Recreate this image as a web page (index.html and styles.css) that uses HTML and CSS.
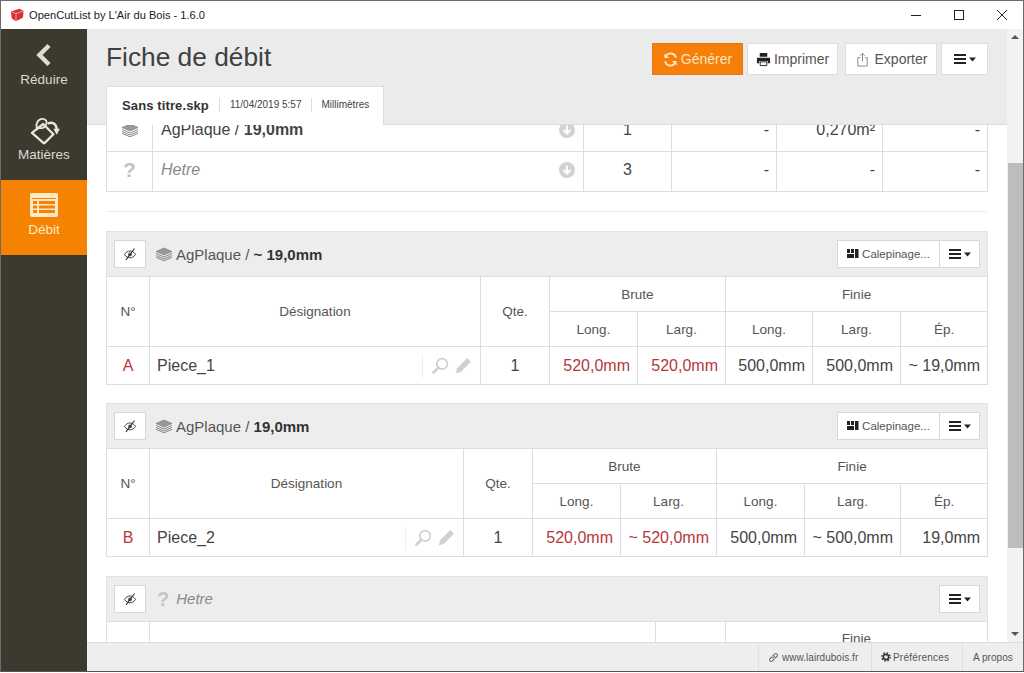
FILE: index.html
```html
<!DOCTYPE html>
<html lang="fr">
<head>
<meta charset="utf-8">
<title>OpenCutList by L'Air du Bois - 1.6.0</title>
<link rel="stylesheet" href="styles.css">
</head>
<body>
<svg class="defs" aria-hidden="true">
  <symbol id="i-eye" viewBox="0 0 14 14"><path d="M1.500 7.400C3 5 5 4 7 4s4 1 5.500 3.400C11 9.800 9 10.800 7 10.800S3 9.800 1.500 7.400Z" fill="none" stroke="#444" stroke-width="1"/><circle cx="7" cy="7.400" r="1.900" fill="#555"/><path d="M3 12.800 11.500 1.500" stroke="#333" stroke-width="1.100"/></symbol>
  <symbol id="i-layers" viewBox="0 0 18 14"><path d="M9 1 17 4.500 9 8 1 4.500Z" fill="#999" stroke="#777" stroke-width=".6"/><path d="M1 6.500 9 10 17 6.500M1 8.500 9 12 17 8.500M1 10.300 9 13.800 17 10.300" fill="none" stroke="#888" stroke-width="1"/></symbol>
  <symbol id="i-bars" viewBox="0 0 22 12"><path d="M0 1h12v2H0zM0 5h12v2H0zM0 9h12v2H0z" fill="#222"/><path d="M15 4.500h7L18.500 8.500Z" fill="#222"/></symbol>
  <symbol id="i-cal" viewBox="0 0 12 10"><path d="M0 0h3v4H0zM4 0h3v4H4zM0 5h7v4H0zM8 0h3.500v9H8z" fill="#222"/></symbol>
  <symbol id="i-search" viewBox="0 0 16 16"><circle cx="9.500" cy="6.500" r="5" fill="none" stroke="#d0d0d0" stroke-width="1.600"/><path d="M6 10 1.500 14.500" stroke="#d0d0d0" stroke-width="2.600" stroke-linecap="round"/></symbol>
  <symbol id="i-pencil" viewBox="0 0 16 16"><path d="M11.500 1 15 4.500 5.500 14 .8 15.200 2 10.500Z" fill="#d0d0d0"/></symbol>
  <symbol id="i-down" viewBox="0 0 16 16"><circle cx="8" cy="8" r="8" fill="#d2d2d2"/><path d="M8 3.500v8M4.500 8 8 11.500 11.500 8" fill="none" stroke="#fff" stroke-width="2"/></symbol>
</svg>

<div class="window">
  <header class="titlebar">
    <svg class="app-logo" viewBox="0 0 14 14"><path d="M.8 3.500 9.500.8 13.500 3 13 9.500 6 13.200 1.800 10.500Z" fill="#d6332f"/><path d="M1 3.500 6 5.500 13.500 3M6 5.500 6 13" fill="none" stroke="#f6b8b0" stroke-width=".8"/></svg>
    <span class="app-title">OpenCutList by L'Air du Bois - 1.6.0</span>
    <div class="win-controls">
      <svg class="win-btn" viewBox="0 0 12 12"><path d="M1 6.500h10" stroke="#222" stroke-width="1"/></svg>
      <svg class="win-btn" viewBox="0 0 12 12"><rect x="1.500" y="1.500" width="9" height="9" fill="none" stroke="#222" stroke-width="1"/></svg>
      <svg class="win-btn" viewBox="0 0 12 12"><path d="M1 1 11 11M11 1 1 11" stroke="#222" stroke-width="1"/></svg>
    </div>
  </header>

  <div class="app">
    <nav class="sidebar">
      <a class="nav-item">
        <svg class="nav-icon nav-chevron" viewBox="0 0 16 24"><path d="M13 2.500 3.500 12 13 21.500" fill="none" stroke="#dedbd2" stroke-width="4.500"/></svg>
        <span>Réduire</span>
      </a>
      <a class="nav-item">
        <svg class="nav-icon nav-bucket" viewBox="0 0 32 30"><path d="M2 17 14 7.500 25 18.500 16 27.500Q15 28.500 14 27.500Z" fill="none" stroke="#e8e6df" stroke-width="2.400" stroke-linejoin="round"/><path d="M8 14C5 7 9 2 13 2s6 3 4 6.500c-1.500 2.500-4.500 4-8 3" fill="none" stroke="#e8e6df" stroke-width="2"/><path d="M19 7c5-2 9 0 9.500 6" fill="none" stroke="#e8e6df" stroke-width="2.600"/><path d="M25 12.500 28.500 19 32 12.500Z" fill="#e8e6df"/></svg>
        <span>Matières</span>
      </a>
      <a class="nav-item nav-active">
        <svg class="nav-icon nav-list" viewBox="0 0 28 24"><rect width="28" height="24" rx="2" fill="#ffe8c4"/><path d="M2 5h24v1H2z" fill="#f58200"/><path d="M3 8h4v3H3zM9 8h16v3H9zM3 12.500h4v3H3zM9 12.500h16v3H9zM3 17h4v3H3zM9 17h16v3H9z" fill="#f58200"/></svg>
        <span>Débit</span>
      </a>
    </nav>

    <div class="main">
      <div class="workspace">
        <div class="content">
          <div class="head">
            <div class="head-top">
              <h1 class="page-title">Fiche de débit</h1>
              <div class="actions">
                <button class="btn btn-primary">
                  <svg class="btn-ic" viewBox="0 0 16 16"><path d="M13.800 6A6 6 0 0 0 3 4.200M2.200 10A6 6 0 0 0 13 11.800" fill="none" stroke="#ffe8c4" stroke-width="2"/><path d="M1.500 1.500v5h5ZM14.500 14.500v-5h-5Z" fill="#ffe8c4"/></svg>Générer
                </button>
                <button class="btn btn-print">
                  <svg class="btn-ic" viewBox="0 0 16 16"><path d="M4 1h8v4H4zM1 6h14v6h-2.500V9.500h-9V12H1z" fill="#222"/><path d="M4.500 10.500h7v4h-7z" fill="#fff" stroke="#222"/></svg>Imprimer
                </button>
                <button class="btn btn-export">
                  <svg class="btn-ic" viewBox="0 0 16 16"><path d="M5.500 6H3v9h10V6h-2.500" fill="none" stroke="#888"/><path d="M8 10V1.500M5.500 4 8 1.500 10.500 4" fill="none" stroke="#888"/></svg>Exporter
                </button>
                <button class="btn btn-menu"><svg class="bars"><use href="#i-bars"/></svg></button>
              </div>
            </div>
            <div class="tab">
              <strong class="tab-file">Sans titre.skp</strong>
              <span class="tab-meta">11/04/2019 5:57</span>
              <span class="tab-meta">Millimètres</span>
            </div>
          </div>

          <div class="scroll">
            <table class="grid summary">
              <colgroup><col class="s1"><col class="s2"><col class="s3"><col class="s4"><col class="s4b"><col class="s4c"></colgroup>
              <tr>
                <td class="ctr"><svg class="sum-layers"><use href="#i-layers"/></svg></td>
                <td><div class="sum-name"><span>AgPlaque / <b>19,0mm</b></span><svg class="sum-down"><use href="#i-down"/></svg></div></td>
                <td class="ctr">1</td><td class="num">-</td><td class="num">0,270m²</td><td class="num">-</td>
              </tr>
              <tr>
                <td class="ctr"><span class="unknown">?</span></td>
                <td><div class="sum-name"><em class="muted">Hetre</em><svg class="sum-down"><use href="#i-down"/></svg></div></td>
                <td class="ctr">3</td><td class="num">-</td><td class="num">-</td><td class="num">-</td>
              </tr>
            </table>

            <hr class="sep">

            <section class="group">
              <div class="group-head">
                <button class="mini eye"><svg class="eye-ic"><use href="#i-eye"/></svg></button>
                <svg class="layers"><use href="#i-layers"/></svg>
                <span class="group-title">AgPlaque / <b>~ 19,0mm</b></span>
                <div class="group-actions">
                  <button class="mini cal"><svg class="cal-ic"><use href="#i-cal"/></svg>Calepinage...</button>
                  <button class="mini more"><svg class="bars"><use href="#i-bars"/></svg></button>
                </div>
              </div>
              <table class="grid parts">
                <colgroup><col class="c-n"><col class="c-des1"><col class="c-q"><col class="c-88"><col class="c-88"><col class="c-87"><col class="c-88"><col class="c-87"></colgroup>
                <tr class="r-head"><th rowspan="2">N°</th><th rowspan="2">Désignation</th><th rowspan="2">Qte.</th><th colspan="2">Brute</th><th colspan="3">Finie</th></tr>
                <tr class="r-head"><th>Long.</th><th>Larg.</th><th>Long.</th><th>Larg.</th><th>Ép.</th></tr>
                <tr class="r-body">
                  <td class="ctr red">A</td>
                  <td><div class="part-name"><span class="part-text">Piece_1</span><span class="part-tools"><svg class="tool"><use href="#i-search"/></svg><svg class="tool"><use href="#i-pencil"/></svg></span></div></td>
                  <td class="ctr">1</td><td class="num red">520,0mm</td><td class="num red">520,0mm</td><td class="num">500,0mm</td><td class="num">500,0mm</td><td class="num">~ 19,0mm</td>
                </tr>
              </table>
            </section>

            <section class="group">
              <div class="group-head">
                <button class="mini eye"><svg class="eye-ic"><use href="#i-eye"/></svg></button>
                <svg class="layers"><use href="#i-layers"/></svg>
                <span class="group-title">AgPlaque / <b>19,0mm</b></span>
                <div class="group-actions">
                  <button class="mini cal"><svg class="cal-ic"><use href="#i-cal"/></svg>Calepinage...</button>
                  <button class="mini more"><svg class="bars"><use href="#i-bars"/></svg></button>
                </div>
              </div>
              <table class="grid parts">
                <colgroup><col class="c-n"><col class="c-des2"><col class="c-q"><col class="c-88"><col class="c-96"><col class="c-88"><col class="c-96"><col class="c-87"></colgroup>
                <tr class="r-head"><th rowspan="2">N°</th><th rowspan="2">Désignation</th><th rowspan="2">Qte.</th><th colspan="2">Brute</th><th colspan="3">Finie</th></tr>
                <tr class="r-head"><th>Long.</th><th>Larg.</th><th>Long.</th><th>Larg.</th><th>Ép.</th></tr>
                <tr class="r-body">
                  <td class="ctr red">B</td>
                  <td><div class="part-name"><span class="part-text">Piece_2</span><span class="part-tools"><svg class="tool"><use href="#i-search"/></svg><svg class="tool"><use href="#i-pencil"/></svg></span></div></td>
                  <td class="ctr">1</td><td class="num red">520,0mm</td><td class="num red">~ 520,0mm</td><td class="num">500,0mm</td><td class="num">~ 500,0mm</td><td class="num">19,0mm</td>
                </tr>
              </table>
            </section>

            <section class="group">
              <div class="group-head">
                <button class="mini eye"><svg class="eye-ic"><use href="#i-eye"/></svg></button>
                <span class="unknown unknown-head">?</span>
                <em class="group-title muted-dark">Hetre</em>
                <div class="group-actions">
                  <button class="mini more"><svg class="bars"><use href="#i-bars"/></svg></button>
                </div>
              </div>
              <table class="grid parts">
                <colgroup><col class="c-n"><col class="c-des3"><col class="c-q3"><col class="c-rest"></colgroup>
                <tr class="r-head"><th></th><th></th><th></th><th>Finie</th></tr>
              </table>
            </section>
          </div>
        </div>

        <aside class="scrollbar">
          <span class="arrow-up"></span>
          <div class="track"><div class="thumb"></div></div>
          <span class="arrow-down"></span>
        </aside>
      </div>

      <footer class="footer">
        <a class="foot-item foot-web">
          <svg class="foot-ic" viewBox="0 0 12 12"><path d="M5 7 7.500 4.500M4.500 5 2 7.500a1.800 1.800 0 0 0 2.500 2.500L7 7.500M5 4.500 7.500 2A1.800 1.800 0 0 1 10 4.500L7.500 7" fill="none" stroke="#666" stroke-width="1.100"/></svg>www.lairdubois.fr
        </a>
        <a class="foot-item foot-pref">
          <svg class="foot-ic" viewBox="0 0 12 12"><circle cx="6" cy="6" r="3.200" fill="none" stroke="#333" stroke-width="2"/><circle cx="6" cy="6" r="5" fill="none" stroke="#333" stroke-width="1.500" stroke-dasharray="2 1.930"/></svg>Préférences
        </a>
        <a class="foot-item foot-about">A propos</a>
      </footer>
    </div>
  </div>
</div>
</body>
</html>
```
FILE: styles.css
```css
* { box-sizing: border-box; }
html, body { margin: 0; padding: 0; height: 100%; overflow: hidden; background: #fff; }
body { font-family: "Liberation Sans", Arial, sans-serif; color: #444; }
.defs { position: absolute; width: 0; height: 0; }

.window { width: 1024px; height: 672px; display: flex; flex-direction: column; border: 1px solid #6b6b6b; border-bottom-color: #555; }

.titlebar { height: 28px; flex: none; display: flex; align-items: center; background: #fff; padding-left: 9px; }
.app-logo { width: 14px; height: 14px; margin-right: 5px; }
.app-title { font-size: 11.100px; color: #222; }
.win-controls { margin-left: auto; display: flex; align-items: center; gap: 31px; padding-right: 15px; }
.win-btn { width: 12px; height: 12px; }

.app { flex: 1; min-height: 0; display: flex; }

.sidebar { width: 86px; flex: none; background: #3c392e; }
.nav-item { height: 75.400px; display: flex; flex-direction: column; align-items: center; color: #dcdad3; font-size: 13.500px; line-height: 16px; }
.nav-icon { display: block; flex: none; }
.nav-chevron { width: 16px; height: 24px; margin-top: 14px; margin-bottom: 5px; }
.nav-bucket { width: 30px; height: 28px; margin-top: 13px; margin-bottom: 2px; margin-left: 1px; }
.nav-list { width: 28px; height: 24px; margin-top: 13px; margin-bottom: 5px; }
.nav-active { background: #f58200; color: #ffe8c4; }

.main { flex: 1; min-width: 0; display: flex; flex-direction: column; }
.workspace { flex: 1; min-height: 0; display: flex; }
.content { flex: 1; min-width: 0; display: flex; flex-direction: column; background: #fff; }

.head { height: 96px; flex: none; background: #ebebeb; border-bottom: 1px solid #ddd; padding: 0 19px; display: flex; flex-direction: column; justify-content: space-between; }
.head-top { display: flex; align-items: flex-start; justify-content: space-between; }
.page-title { margin: 12px 0 0; font-size: 26.300px; line-height: 32px; font-weight: 400; color: #404040; }
.actions { display: flex; margin-top: 14px; }
.btn { height: 32px; display: flex; align-items: center; justify-content: center; border: 1px solid #ddd; background: #fff; font: 14px "Liberation Sans", Arial, sans-serif; color: #555; padding: 0; }
.btn-ic { width: 15px; height: 15px; margin-right: 3px; flex: none; }
.btn-primary { width: 91px; background: #f57f0a; border-color: #e67a10; color: #ffe4bd; }
.btn-print { width: 91px; margin-left: 4px; }
.btn-export { width: 92px; margin-left: 7px; }
.btn-export .btn-ic { margin-right: 5px; }
.btn-menu { width: 47px; margin-left: 4px; }
.bars { width: 22px; height: 12px; display: block; }

.tab { width: 278px; height: 39px; margin-bottom: -1px; background: #fff; border: 1px solid #ddd; border-bottom: 0; display: flex; align-items: center; padding: 0 0 2px 15px; }
.tab-file { font-size: 13px; letter-spacing: .12px; color: #333; padding-right: 10px; }
.tab-meta { font-size: 10px; color: #444; border-left: 1px solid #ddd; padding-left: 10px; padding-right: 9px; line-height: 14px; }

.scroll { flex: 1; min-height: 0; overflow: hidden; padding: 0 19px; }

.grid { width: 882px; border-collapse: collapse; table-layout: fixed; background: #fff; }
.grid td, .grid th { border: 1px solid #ddd; padding: 0; }
.summary { margin-top: -14px; font-size: 16px; }
.summary tr { height: 40px; }
.summary td { padding-bottom: 3px; }
.s1 { width: 46px; } .s2 { width: 431px; } .s3 { width: 88px; } .s4 { width: 105px; } .s4b { width: 106px; } .s4c { width: 105px; }
.ctr { text-align: center; }
.num { text-align: right; padding-right: 7px !important; white-space: nowrap; }
.sum-layers { width: 18px; height: 14px; display: block; margin: 0 auto; }
.sum-name { display: flex; align-items: center; justify-content: space-between; padding: 0 8px; }
.sum-down { width: 16px; height: 16px; }
.muted { color: #8a8a8a; }
.unknown { font-size: 21px; font-weight: 700; color: #c4c4c4; }

.sep { border: 0; border-top: 1px solid #eee; margin: 19px 0 19px; }

.group { margin-bottom: 18.400px; }
.group-head { height: 45px; display: flex; align-items: center; background: #ededed; border: 1px solid #e2e2e2; border-bottom: 0; padding: 0 7px; }
.mini { height: 28px; background: #fff; border: 1px solid #d8d8d8; padding: 0; display: flex; align-items: center; justify-content: center; font: 11.500px "Liberation Sans", Arial, sans-serif; color: #555; }
.eye { width: 32px; }
.eye-ic { width: 14px; height: 14px; }
.layers { width: 18px; height: 14px; margin-left: 9px; margin-right: 3px; }
.group-title { font-size: 15px; color: #555; }
.group-title b { color: #333; }
.muted-dark { color: #888; }
.unknown-head { margin-left: 11px; margin-right: 7px; font-size: 20px; line-height: 20px; }
.group-actions { margin-left: auto; display: flex; }
.cal { width: 103px; }
.cal-ic { width: 12px; height: 10px; margin-right: 3px; }
.more { width: 41px; margin-left: -1px; }

.parts { font-size: 16px; }
.parts th { font-size: 13.500px; font-weight: 400; color: #555; text-align: center; }
.r-head { height: 35px; }
.r-body { height: 38px; }
.c-n { width: 43px; } .c-des1 { width: 331px; } .c-des2 { width: 314px; } .c-des3 { width: 506px; }
.c-q { width: 69px; } .c-q3 { width: 70px; } .c-87 { width: 87px; } .c-88 { width: 88px; } .c-96 { width: 96px; } .c-rest { width: 262px; }
.red { color: #b4383c; }
.part-name { display: flex; align-items: center; justify-content: space-between; padding-left: 7px; }
.part-tools { display: flex; align-items: center; gap: 6px; height: 24px; border-left: 1px solid #eee; padding: 0 8px 0 9px; }
.tool { width: 17px; height: 17px; display: block; }

.scrollbar { width: 16px; flex: none; background: #f2f2f2; display: flex; flex-direction: column; align-items: center; }
.track { flex: 1; width: 100%; padding-top: 118px; padding-bottom: 78px; display: flex; }
.thumb { flex: 1; margin-left: 1px; background: #bdbdbd; }
.arrow-up, .arrow-down { width: 0; height: 0; border-left: 4px solid transparent; border-right: 4px solid transparent; flex: none; }
.arrow-up { border-bottom: 4px solid #555; margin-top: 6px; margin-bottom: 6px; }
.arrow-down { border-top: 4px solid #555; margin-top: 6px; margin-bottom: 6px; }

.footer { height: 29px; flex: none; background: #eee; border-top: 1px solid #ddd; display: flex; justify-content: flex-end; font-size: 10px; color: #555; }
.foot-item { display: flex; align-items: center; border-left: 1px solid #e0e0e0; padding-left: 9px; letter-spacing: .04px; }
.foot-ic { width: 11px; height: 11px; margin-right: 3px; }
.foot-web { width: 113px; }
.foot-pref { width: 91px; letter-spacing: .2px; }
.foot-pref .foot-ic { width: 10px; height: 10px; margin-right: 2px; }
.foot-about { width: 61px; padding-left: 10px; }
```
